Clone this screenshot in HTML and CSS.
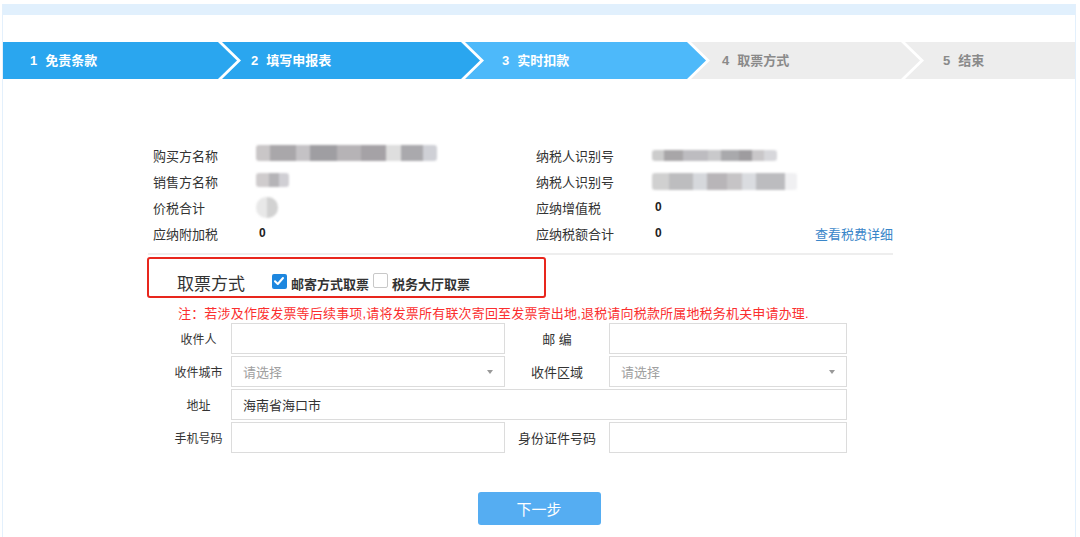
FILE: index.html
```html
<!DOCTYPE html>
<html lang="zh">
<head>
<meta charset="utf-8">
<title>取票方式</title>
<link rel="stylesheet" href="styles.css">
</head>
<body>
<div class="frame">
  <div class="topband"></div>
  <div class="steps">
    <div class="step done s1"><span class="num">1</span>免责条款</div>
    <div class="step done s2"><span class="num">2</span>填写申报表</div>
    <div class="step cur s3"><span class="num">3</span>实时扣款</div>
    <div class="step todo s4"><span class="num">4</span>取票方式</div>
    <div class="step todo last s5"><span class="num">5</span>结束</div>
  </div>

  <div class="info">
    <div class="lbl">购买方名称</div>
    <div class="val"><span class="blur b1"></span></div>
    <div class="lbl">纳税人识别号</div>
    <div class="val"><span class="blur b3"></span></div>

    <div class="lbl">销售方名称</div>
    <div class="val"><span class="blur b2"></span></div>
    <div class="lbl">纳税人识别号</div>
    <div class="val"><span class="blur b4"></span></div>

    <div class="lbl">价税合计</div>
    <div class="val"><span class="blur b5"></span></div>
    <div class="lbl">应纳增值税</div>
    <div class="val num-val">0</div>

    <div class="lbl">应纳附加税</div>
    <div class="val num-val">0</div>
    <div class="lbl">应纳税额合计</div>
    <div class="val num-val split"><span>0</span><a class="link">查看税费详细</a></div>
  </div>
  <div class="divider"></div>

  <div class="pickbox">
    <span class="pick-title">取票方式</span>
    <span class="chk checked"><svg viewBox="0 0 14 14" width="14" height="14"><path d="M3 7.2 L5.8 10 L11 4" fill="none" stroke="#fff" stroke-width="2" stroke-linecap="round" stroke-linejoin="round"/></svg></span>
    <span class="opt">邮寄方式取票</span>
    <span class="chk"></span>
    <span class="opt">税务大厅取票</span>
  </div>

  <div class="note">注：若涉及作废发票等后续事项,请将发票所有联次寄回至发票寄出地,退税请向税款所属地税务机关申请办理.</div>

  <div class="form">
    <div class="flbl">收件人</div>
    <div class="field"></div>
    <div class="flbl r">邮 编</div>
    <div class="field"></div>

    <div class="flbl">收件城市</div>
    <div class="field select"><span class="ph">请选择</span><span class="caret"></span></div>
    <div class="flbl r">收件区域</div>
    <div class="field select"><span class="ph">请选择</span><span class="caret"></span></div>

    <div class="flbl">地址</div>
    <div class="field wide"><span class="txt">海南省海口市</span></div>

    <div class="flbl">手机号码</div>
    <div class="field"></div>
    <div class="flbl r">身份证件号码</div>
    <div class="field"></div>
  </div>

  <div class="actions">
    <button class="next">下一步</button>
  </div>
</div>
</body>
</html>
```

FILE: styles.css
```css
* { box-sizing: border-box; }
html, body {
  margin: 0;
  padding: 0;
  background: #fff;
  font-family: "Liberation Sans", "Noto Sans CJK SC", sans-serif;
  color: #333;
}
.frame {
  margin: 4px 4px 0 2px;
  height: 533px;
  border-left: 1px solid #e3f0fc;
  border-right: 1px solid #e3f0fc;
  background: #fff;
}
.topband {
  height: 11px;
  background: #e1f0fd;
}

/* Steps */
.steps {
  display: flex;
  margin-top: 27px;
  height: 37px;
}
.step {
  height: 37px;
  line-height: 37px;
  font-size: 13px;
  font-weight: bold;
  white-space: nowrap;
  clip-path: polygon(0 0, calc(100% - 19px) 0, 100% 50%, calc(100% - 19px) 100%, 0 100%, 19px 50%);
  margin-left: -15px;
}
.step .num { margin-right: 8px; }
.s1 { width: 234px; padding-left: 27px; margin-left: 0;
  clip-path: polygon(0 0, calc(100% - 19px) 0, 100% 50%, calc(100% - 19px) 100%, 0 100%); }
.s2 { width: 258px; padding-left: 29px; }
.s3 { width: 241px; padding-left: 37px; }
.s4 { width: 229px; padding-left: 31px; }
.s5 { width: 170px; padding-left: 38px;
  clip-path: polygon(0 0, 100% 0, 100% 100%, 0 100%, 19px 50%); }
.done { background: #2aa6ef; color: #fff; }
.cur { background: #4db9fa; color: #fff; }
.todo { background: #ededed; color: #8a8a8a; }

/* Info */
.info {
  margin: 63px 0 0 145px;
  width: 745px;
  padding-left: 5px;
  display: grid;
  grid-template-columns: 103px 280px 116px 1fr;
  grid-auto-rows: 26px;
  font-size: 13px;
}
.info .lbl, .info .val {
  display: flex;
  align-items: center;
}
.info .lbl { color: #333; }
.num-val { font-weight: bold; padding-left: 3px; color: #222; font-size: 12px; }
.split { justify-content: space-between; }
.link {
  color: #3a86c9;
  font-weight: normal;
  font-size: 13px;
  cursor: pointer;
}
.blur {
  display: block;
  filter: blur(1.2px);
  border-radius: 3px;
}
.b1 {
  width: 181px; height: 16px; margin-top: -4px;
  background: linear-gradient(90deg, #c9c6c7 0 8%, #a9a7aa 8% 22%, #c4c2c5 22% 30%, #9f9ea2 30% 45%, #b6b3b6 45% 58%, #a5a2a6 58% 72%, #dedede 72% 80%, #aaa9ad 80% 92%, #cfd0d6 92% 100%);
}
.b2 { width: 33px; height: 14px; margin-top: -2px;
  background: linear-gradient(90deg, #cfcccd 0 40%, #b5b4b7 40% 70%, #d0cfd4 70%); }
.b3 { width: 125px; height: 11px;
  background: linear-gradient(90deg, #ccc 0 10%, #a8a6a8 10% 25%, #bdbcc0 25% 45%, #c9c9cb 45% 55%, #a9a9ac 55% 70%, #9e9c9f 70% 80%, #c9c7c9 80% 90%, #d7d7db 90%); }
.b4 { width: 145px; height: 17px;
  background: linear-gradient(90deg, #d0d0d0 0 12%, #bdbdbf 12% 28%, #d6d8dc 28% 38%, #b8b5b8 38% 52%, #c6c4c6 52% 62%, #dadce0 62% 72%, #bcbcbf 72% 92%, #f0f0f2 92%); }
.b5 { width: 22px; height: 21px; border-radius: 10px;
  background: linear-gradient(90deg, #e8e8e8 0 50%, #d2d2d2 50%); }

.divider {
  margin: 7px 0 0 145px;
  width: 745px;
  height: 2px;
  background: #eeeeee;
}

/* Pick box */
.pickbox {
  margin: 2px 0 0 144px;
  width: 399px;
  height: 41px;
  border: 2px solid #e8261d;
  border-radius: 3px;
  display: flex;
  align-items: center;
  padding: 11px 0 0 28px;
}
.pick-title {
  font-size: 17px;
  color: #333;
  margin-right: 27px;
  margin-top: 4px;
  line-height: 20px;
}
.chk {
  width: 15px;
  height: 15px;
  border: 1px solid #c8c8c8;
  border-radius: 2px;
  background: #fff;
  display: inline-flex;
  margin-top: -6px;
  margin-right: 4px;
}
.chk.checked {
  border: none;
  background: #1d87df;
  margin-top: -3px;
}
.opt {
  font-size: 13px;
  font-weight: bold;
  color: #333;
  margin-right: 4px;
}

.note {
  margin: 7px 0 0 175px;
  font-size: 13px;
  color: #fb2f2f;
  line-height: 18px;
  letter-spacing: 0.18px;
  white-space: nowrap;
}

/* Form */
.form {
  margin: 0 0 0 163px;
  width: 682px;
  display: grid;
  grid-template-columns: 65px 274px 104px 238px;
  grid-auto-rows: 31px;
  row-gap: 2px;
  font-size: 12px;
}
.flbl {
  display: flex;
  align-items: center;
  justify-content: center;
  color: #333;
}
.flbl.r { font-size: 13px; }
.field {
  border: 1px solid #dcdcdc;
  background: #fff;
  display: flex;
  align-items: center;
  padding: 0 11px;
  font-size: 13px;
}
.field.wide { grid-column: 2 / 5; }
.field.select { justify-content: space-between; }
.ph { color: #a0a0a0; }
.txt { color: #333; }
.caret {
  width: 0;
  height: 0;
  border-left: 3.5px solid transparent;
  border-right: 3.5px solid transparent;
  border-top: 4px solid #999;
}

.actions {
  display: flex;
  justify-content: center;
  margin-top: 39px;
}
.next {
  width: 123px;
  height: 33px;
  border: none;
  border-radius: 3px;
  background: #55adf2;
  color: #fff;
  font-family: "Liberation Sans", "Noto Sans CJK SC", sans-serif;
  font-size: 15px;
  cursor: pointer;
}
```
